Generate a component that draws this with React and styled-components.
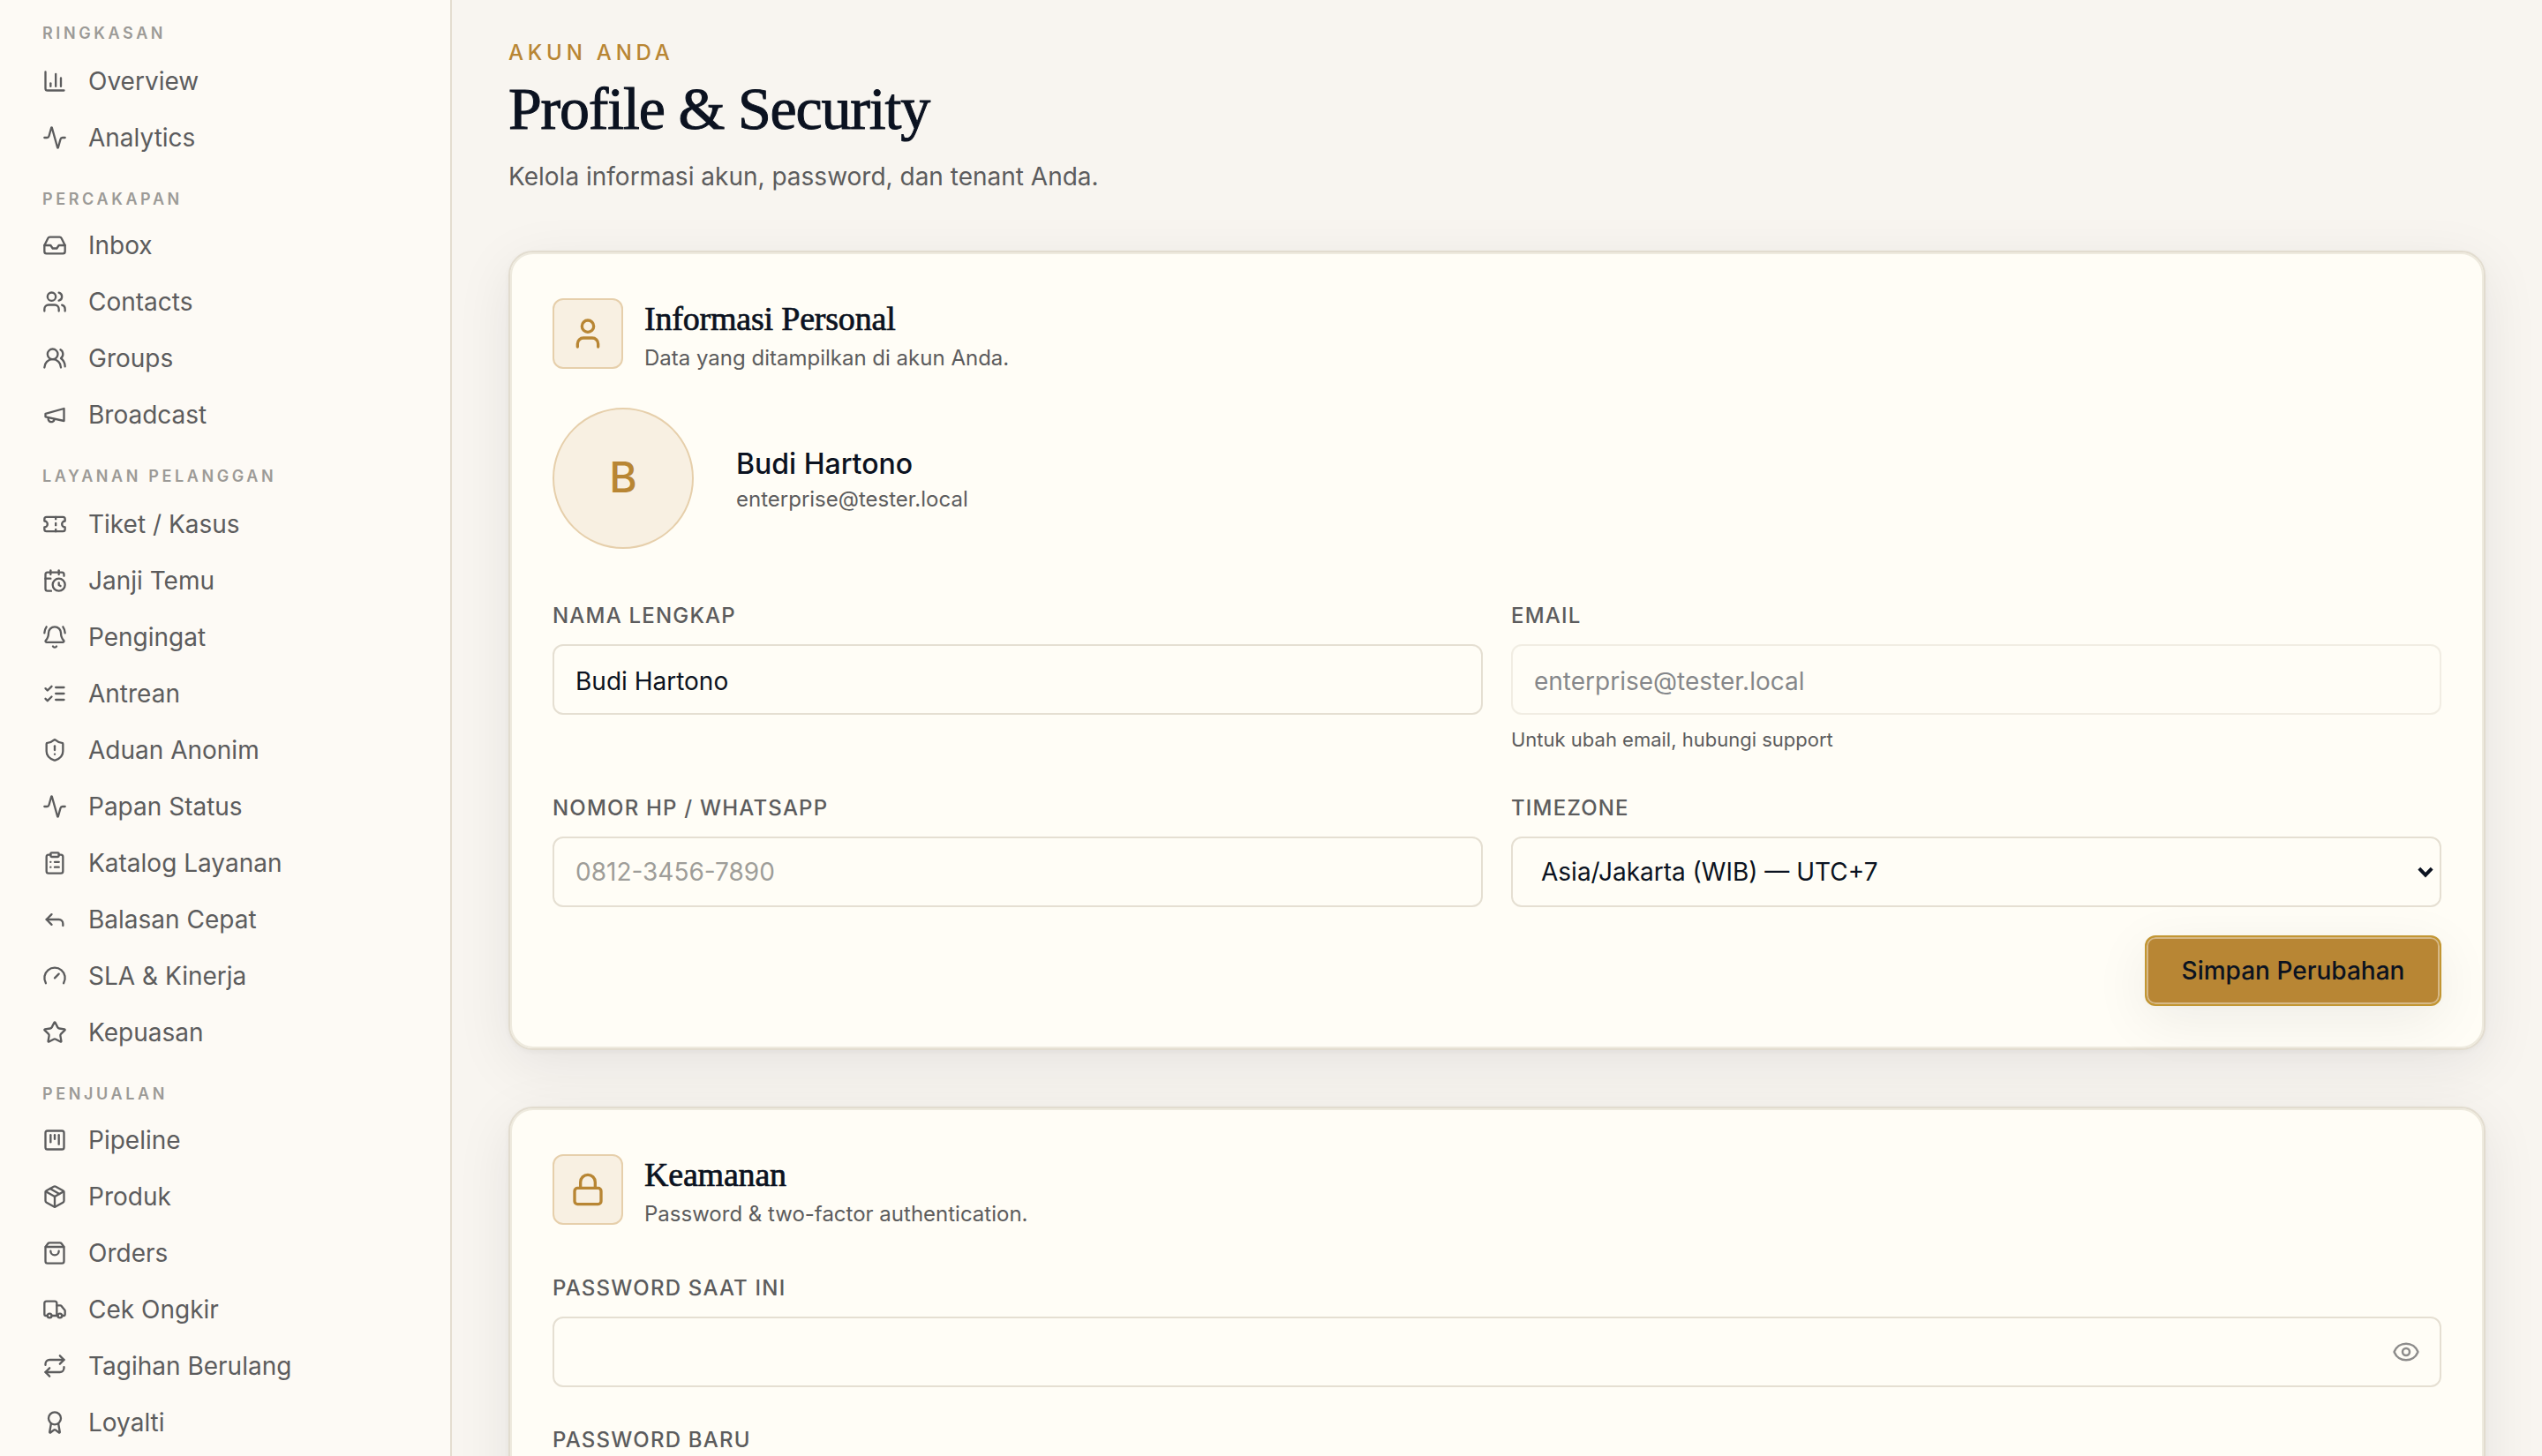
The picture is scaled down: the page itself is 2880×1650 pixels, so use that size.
import { useState } from 'react';
import styled, { createGlobalStyle } from 'styled-components';
import {
  Activity,
  Award,
  BellRing,
  CalendarClock,
  ChartColumn,
  ClipboardList,
  Eye,
  Gauge,
  Inbox,
  Lock,
  Package,
  Repeat,
  Reply,
  ShieldAlert,
  ShoppingBag,
  SquareKanban,
  Star,
  Ticket,
  Truck,
  User,
  Users,
  UsersRound,
} from 'lucide-react';

const Stroke = ({ size, children }) => (
  <svg
    width={size}
    height={size}
    viewBox='0 0 24 24'
    fill='none'
    stroke='currentColor'
    strokeWidth={2}
    strokeLinecap='round'
    strokeLinejoin='round'
  >
    {children}
  </svg>
);

const Megaphone = (props) => (
  <Stroke {...props}>
    <path d='m3 11 18-5v12L3 14v-3z' />
    <path d='M11.6 16.8a3 3 0 1 1-5.8-1.6' />
  </Stroke>
);

const ListChecks = (props) => (
  <Stroke {...props}>
    <path d='m3 17 2 2 4-4' />
    <path d='m3 7 2 2 4-4' />
    <path d='M13 6h8' />
    <path d='M13 12h8' />
    <path d='M13 18h8' />
  </Stroke>
);

const sections = [
  {
    title: 'Ringkasan',
    height: 60,
    items: [
      { label: 'Overview', icon: ChartColumn },
      { label: 'Analytics', icon: Activity },
    ],
  },
  {
    title: 'Percakapan',
    height: 58,
    items: [
      { label: 'Inbox', icon: Inbox },
      { label: 'Contacts', icon: Users },
      { label: 'Groups', icon: UsersRound },
      { label: 'Broadcast', icon: Megaphone },
    ],
  },
  {
    title: 'Layanan Pelanggan',
    height: 60,
    items: [
      { label: 'Tiket / Kasus', icon: Ticket },
      { label: 'Janji Temu', icon: CalendarClock },
      { label: 'Pengingat', icon: BellRing },
      { label: 'Antrean', icon: ListChecks },
      { label: 'Aduan Anonim', icon: ShieldAlert },
      { label: 'Papan Status', icon: Activity },
      { label: 'Katalog Layanan', icon: ClipboardList },
      { label: 'Balasan Cepat', icon: Reply },
      { label: 'SLA & Kinerja', icon: Gauge },
      { label: 'Kepuasan', icon: Star },
    ],
  },
  {
    title: 'Penjualan',
    height: 58,
    items: [
      { label: 'Pipeline', icon: SquareKanban },
      { label: 'Produk', icon: Package },
      { label: 'Orders', icon: ShoppingBag },
      { label: 'Cek Ongkir', icon: Truck },
      { label: 'Tagihan Berulang', icon: Repeat },
      { label: 'Loyalti', icon: Award },
    ],
  },
];

const App = () => {
  const [name, setName] = useState('Budi Hartono');
  const [phone, setPhone] = useState('');
  const [visible, setVisible] = useState(false);

  return (
    <Page>
      <GlobalStyle />
      <Sidebar>
        {sections.map((section) => (
          <nav key={section.title}>
            <SectionTitle $height={section.height}>{section.title}</SectionTitle>
            {section.items.map(({ label, icon: Icon }) => (
              <NavItem key={label}>
                <Icon size={28} />
                {label}
              </NavItem>
            ))}
          </nav>
        ))}
      </Sidebar>
      <Main>
        <Eyebrow>Akun Anda</Eyebrow>
        <Title>Profile &amp; Security</Title>
        <Subtitle>Kelola informasi akun, password, dan tenant Anda.</Subtitle>

        <Card>
          <CardHead>
            <IconBox>
              <User size={40} />
            </IconBox>
            <CardText>
              <CardTitle>Informasi Personal</CardTitle>
              <CardDesc>Data yang ditampilkan di akun Anda.</CardDesc>
            </CardText>
          </CardHead>
          <Account>
            <Avatar>B</Avatar>
            <div>
              <AccountName>Budi Hartono</AccountName>
              <AccountEmail>enterprise@tester.local</AccountEmail>
            </div>
          </Account>
          <FormGrid>
            <Field>
              <Label htmlFor='name'>Nama Lengkap</Label>
              <Input
                id='name'
                $shift
                value={name}
                onChange={(e) => setName(e.target.value)}
              />
            </Field>
            <Field>
              <Label htmlFor='email'>Email</Label>
              <Input id='email' $shift value='enterprise@tester.local' disabled />
              <Hint>Untuk ubah email, hubungi support</Hint>
            </Field>
            <Field>
              <Label htmlFor='phone'>Nomor HP / WhatsApp</Label>
              <Input
                id='phone'
                placeholder='0812-3456-7890'
                value={phone}
                onChange={(e) => setPhone(e.target.value)}
              />
            </Field>
            <Field>
              <Label htmlFor='timezone'>Timezone</Label>
              <Control>
                <Select id='timezone'>
                  <option>Asia/Jakarta (WIB) — UTC+7</option>
                </Select>
                <Chevron viewBox='0 0 18 14'>
                  <path d='M1.8 2.2 9 9.6l7.2-7.4' />
                </Chevron>
              </Control>
            </Field>
          </FormGrid>
          <Actions>
            <SaveButton>Simpan Perubahan</SaveButton>
          </Actions>
        </Card>

        <Card>
          <CardHead>
            <IconBox>
              <Lock size={40} />
            </IconBox>
            <CardText>
              <CardTitle>Keamanan</CardTitle>
              <CardDesc>Password &amp; two-factor authentication.</CardDesc>
            </CardText>
          </CardHead>
          <PasswordForm>
            <Field>
              <Label htmlFor='current'>Password Saat Ini</Label>
              <Control>
                <Input id='current' type={visible ? 'text' : 'password'} />
                <EyeButton onClick={() => setVisible(!visible)}>
                  <Eye size={32} strokeWidth={1.9} />
                </EyeButton>
              </Control>
            </Field>
            <Field>
              <Label htmlFor='next'>Password Baru</Label>
              <Input id='next' type='password' />
            </Field>
          </PasswordForm>
        </Card>
      </Main>
    </Page>
  );
};

const GlobalStyle = createGlobalStyle`
  * {
    box-sizing: border-box;
    margin: 0;
  }

  body {
    font-family: Inter, sans-serif;
    color: #0b1220;
    background-color: #f8f5f0;
    overflow: hidden;
  }
`;

const Page = styled.div`
  display: flex;
  height: 1650px;
  overflow: hidden;
`;

const Sidebar = styled.aside`
  flex: none;
  width: 512px;
  padding: 0 48px;
  background-color: #fdfaf5;
  border-right: 2px solid #e4ddd0;
`;

const SectionTitle = styled.h2`
  height: ${({ $height }) => $height}px;
  padding-top: 26px;
  font-size: 18px;
  line-height: 23px;
  font-weight: 600;
  letter-spacing: 0.2em;
  text-transform: uppercase;
  color: #9c9a97;
`;

const NavItem = styled.a`
  display: flex;
  align-items: center;
  gap: 24px;
  height: 64px;
  font-size: 28px;
  color: #5c5c5d;
`;

const Main = styled.main`
  flex: 1;
  padding: 44px 64px 0;
`;

const Eyebrow = styled.p`
  font-size: 24px;
  line-height: 32px;
  font-weight: 500;
  letter-spacing: 0.2em;
  text-transform: uppercase;
  color: #b88634;
`;

const Title = styled.h1`
  margin-top: 7px;
  font-family: 'Liberation Serif', serif;
  font-size: 68px;
  line-height: 80px;
  font-weight: 400;
  letter-spacing: -1.2px;
  -webkit-text-stroke: 1px currentColor;
`;

const Subtitle = styled.p`
  margin: 15px 0 62px;
  font-size: 28px;
  line-height: 44px;
  color: #5c5c5d;
`;

const Card = styled.section`
  padding: 50px 48px 48px;
  background-color: #fffdf6;
  border: 2px solid #e2dccf;
  border-radius: 28px;
  box-shadow: inset 0 0 0 2px #eeeade, 0 2px 6px rgba(11, 18, 32, 0.04),
    0 16px 64px rgba(11, 18, 32, 0.08);

  &:not(:last-of-type) {
    margin-bottom: 64px;
  }
`;

const CardHead = styled.header`
  display: flex;
  gap: 24px;
  height: 88px;
`;

const IconBox = styled.span`
  display: flex;
  align-items: center;
  justify-content: center;
  width: 80px;
  height: 80px;
  margin-top: 2px;
  color: #b88634;
  background-color: #f8f0e2;
  border: 2px solid #e6cfab;
  border-radius: 12px;
`;

const CardText = styled.div`
  padding-top: 1px;
`;

const CardTitle = styled.h2`
  font-family: 'Liberation Serif', serif;
  font-size: 38px;
  line-height: 48px;
  font-weight: 400;
  letter-spacing: -0.2px;
  -webkit-text-stroke: 0.7px currentColor;
`;

const CardDesc = styled.p`
  margin-top: 3px;
  font-size: 24px;
  line-height: 36px;
  color: #5c5c5d;
`;

const Account = styled.div`
  display: flex;
  align-items: center;
  gap: 48px;
  margin-top: 38px;
`;

const Avatar = styled.span`
  display: flex;
  align-items: center;
  justify-content: center;
  width: 160px;
  height: 160px;
  padding-bottom: 4px;
  font-size: 48px;
  font-weight: 500;
  color: #b88634;
  background-color: #f8f0e2;
  border: 2px solid #e6cfab;
  border-radius: 50%;
`;

const AccountName = styled.p`
  font-size: 32px;
  line-height: 48px;
  font-weight: 500;
`;

const AccountEmail = styled.p`
  font-size: 24px;
  line-height: 32px;
  color: #5c5c5d;
`;

const FormGrid = styled.form`
  display: grid;
  grid-template-columns: 1fr 1fr;
  gap: 46px 32px;
  margin-top: 60px;
`;

const PasswordForm = styled.form`
  display: flex;
  flex-direction: column;
  gap: 44px;
  margin-top: 50px;
`;

const Field = styled.div`
  display: flex;
  flex-direction: column;
`;

const Label = styled.label`
  margin-bottom: 16px;
  font-size: 24px;
  line-height: 32px;
  font-weight: 500;
  letter-spacing: 0.05em;
  text-transform: uppercase;
  color: #5c5c5d;
`;

const Input = styled.input`
  width: 100%;
  height: 80px;
  padding: ${({ $shift }) => ($shift ? '4px 24px 0' : '0 24px')};
  font-family: inherit;
  font-size: 28px;
  color: #0b1220;
  background-color: #fffdf6;
  border: 2px solid #e5dfd2;
  border-radius: 12px;
  outline-color: #b88634;

  &:disabled {
    opacity: 0.5;
  }

  &::placeholder {
    color: #9e9d99;
  }
`;

const Hint = styled.p`
  margin-top: 12px;
  font-size: 22px;
  line-height: 32px;
  color: #5c5c5d;
`;

const Control = styled.div`
  position: relative;
`;

const Select = styled.select`
  display: block;
  width: 100%;
  height: 80px;
  padding: 0 32px;
  appearance: none;
  font-family: inherit;
  font-size: 28px;
  color: #0b1220;
  background-color: #fffdf6;
  border: 2px solid #e5dfd2;
  border-radius: 12px;
`;

const Chevron = styled.svg`
  position: absolute;
  top: 34px;
  right: 9px;
  width: 18px;
  height: 14px;
  fill: none;
  stroke: #0b1220;
  stroke-width: 4;
  pointer-events: none;
`;

const EyeButton = styled.button.attrs({ type: 'button' })`
  position: absolute;
  top: 24px;
  right: 24px;
  display: flex;
  padding: 0;
  color: #8d8c8b;
  background: none;
  border: none;
`;

const Actions = styled.div`
  display: flex;
  justify-content: flex-end;
  margin-top: 32px;
`;

const SaveButton = styled.button`
  width: 336px;
  height: 80px;
  font-family: inherit;
  font-size: 28px;
  font-weight: 500;
  color: #0b1220;
  background-color: #b88634;
  border: 2px solid #c29632;
  border-radius: 12px;
  box-shadow: inset 0 0 0 2px #d6b887, 0 2px 6px rgba(11, 18, 32, 0.02),
    0 16px 64px rgba(11, 18, 32, 0.07);
`;

export default App;
